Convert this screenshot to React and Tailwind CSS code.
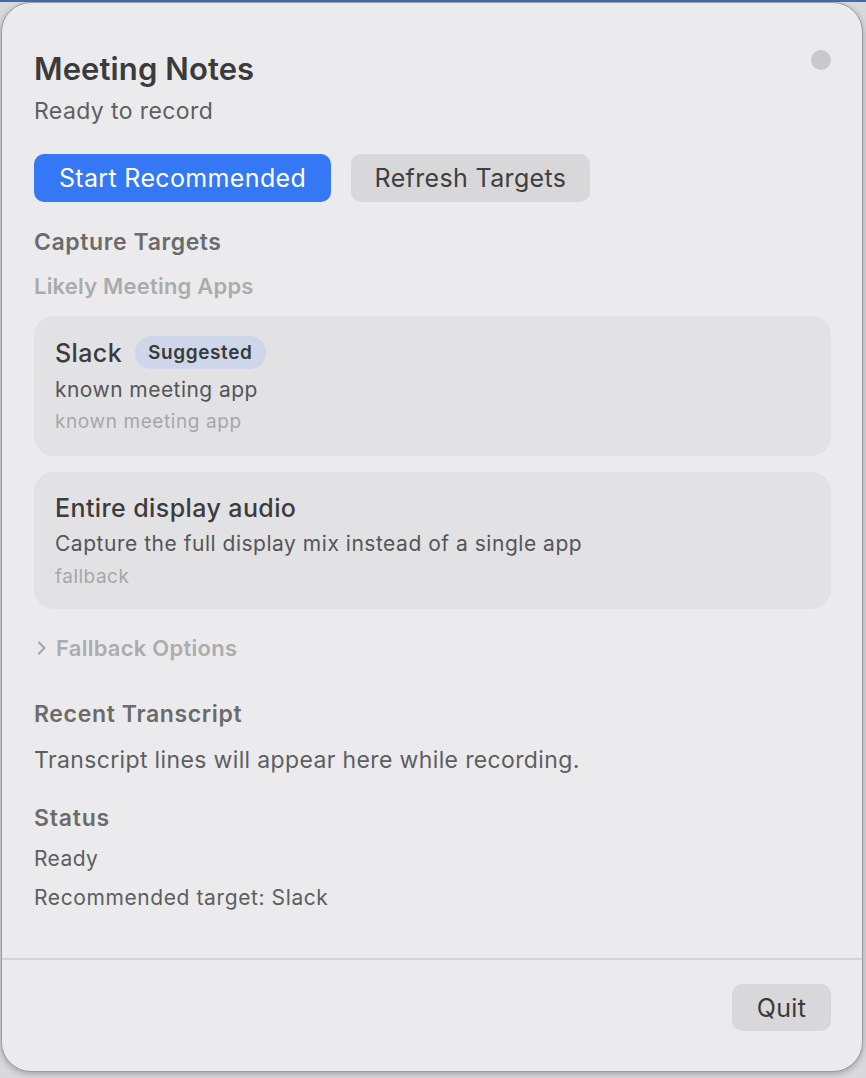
import React from "react";

const font = { fontFamily: 'Inter, "Noto Sans", sans-serif' };

export default function App() {
  return (
    <div
      className="w-[866px] h-[1078px] bg-[#d9d9db] border-t-2 border-[#3a6ea5] pl-[1px] pr-[3px] pb-[6px] overflow-hidden"
      style={font}
    >
      <div className="h-[1070px] rounded-[30px] border border-[#9c9c9e] bg-[#ebebed] flex flex-col shadow-[0_2px_6px_rgba(0,0,0,0.25)]">
        <div className="flex-1 flex flex-col pl-[32px] pr-[31px]">
          {/* header */}
          <div className="mt-[48px] flex justify-between items-start">
            <div className="text-[31px] leading-[36px] font-semibold text-[#3b3b3b] tracking-[0.1px]">
              Meeting Notes
            </div>
            <div className="w-[20px] h-[20px] rounded-full bg-[#c9c9cd] mt-[-1px]" />
          </div>
          <div className="mt-[10px] text-[23px] leading-[28px] text-[#5f5f5f] tracking-[0.4px]">
            Ready to record
          </div>

          {/* buttons */}
          <div className="mt-[29px] flex gap-[20px]">
            <button className="h-[48px] w-[297px] rounded-[10px] bg-[#3478f6] text-white text-[25px] leading-[30px] tracking-[0.35px]">
              Start Recommended
            </button>
            <button className="h-[48px] w-[239px] rounded-[10px] bg-[#d8d8da] text-[#3f3f3f] text-[25px] leading-[30px] tracking-[0.35px]">
              Refresh Targets
            </button>
          </div>

          <div className="mt-[26px] text-[23px] leading-[28px] font-semibold text-[#6b6b6b] tracking-[0.6px]">
            Capture Targets
          </div>
          <div className="mt-[16px] text-[22px] leading-[28px] font-semibold text-[#ababab] tracking-[0.2px]">
            Likely Meeting Apps
          </div>

          {/* card 1 */}
          <div className="mt-[16px] rounded-[20px] bg-[#e2e2e4] pl-[21px] pr-[20px] pt-[20px] pb-[22px] flex flex-col">
            <div className="h-[33px] flex items-center gap-[13px]">
              <span className="text-[25px] leading-[30px] font-medium text-[#3c3c3c] tracking-[0.4px]">Slack</span>
              <span className="h-[33px] px-[13px] rounded-full bg-[#cdd7e9] text-[19px] leading-[33px] font-semibold text-[#3a3a3a] tracking-[0.6px]">
                Suggested
              </span>
            </div>
            <div className="mt-[8px] text-[21px] leading-[26px] text-[#555557] tracking-[0.45px]">known meeting app</div>
            <div className="mt-[7px] text-[19px] leading-[24px] text-[#a7a7a9] tracking-[0.6px]">known meeting app</div>
          </div>

          {/* card 2 */}
          <div className="mt-[16px] rounded-[20px] bg-[#e2e2e4] pl-[21px] pr-[20px] pt-[21px] pb-[20px] flex flex-col">
            <div className="text-[25px] leading-[30px] font-medium text-[#3c3c3c] tracking-[0.4px]">Entire display audio</div>
            <div className="mt-[8px] text-[21px] leading-[26px] text-[#555557] tracking-[0.52px]">
              Capture the full display mix instead of a single app
            </div>
            <div className="mt-[8px] text-[19px] leading-[24px] text-[#a7a7a9] tracking-[0.5px]">fallback</div>
          </div>

          {/* fallback options */}
          <div className="mt-[25px] flex items-center gap-[8px] text-[22px] leading-[28px] font-semibold text-[#acacae] tracking-[0.25px]">
            <svg width="12" height="14" viewBox="0 0 12 14" className="ml-[2px]">
              <path d="M3 1.5 L8.5 7 L3 12.5" fill="none" stroke="#a3a3a5" strokeWidth="2" strokeLinecap="round" strokeLinejoin="round" />
            </svg>
            <span>Fallback Options</span>
          </div>

          <div className="mt-[38px] text-[23px] leading-[28px] font-semibold text-[#6b6b6b] tracking-[0.65px]">
            Recent Transcript
          </div>
          <div className="mt-[18px] text-[23px] leading-[28px] text-[#5e5e5e] tracking-[0.36px]">
            Transcript lines will appear here while recording.
          </div>

          <div className="mt-[30px] text-[23px] leading-[28px] font-semibold text-[#6b6b6b] tracking-[0.8px]">Status</div>
          <div className="mt-[14px] text-[21px] leading-[26px] text-[#5e5e5e] tracking-[0.4px]">Ready</div>
          <div className="mt-[13px] text-[21px] leading-[26px] text-[#5e5e5e] tracking-[0.6px]">Recommended target: Slack</div>
        </div>

        <div className="h-[2px] bg-[#d3d3d5]" />
        <div className="h-[111px] flex justify-end items-start pt-[24px] pr-[31px]">
          <button className="h-[47px] w-[99px] rounded-[10px] bg-[#d8d8da] text-[#3a3a3a] text-[25px] leading-[30px] tracking-[0.3px]">
            Quit
          </button>
        </div>
      </div>
    </div>
  );
}
